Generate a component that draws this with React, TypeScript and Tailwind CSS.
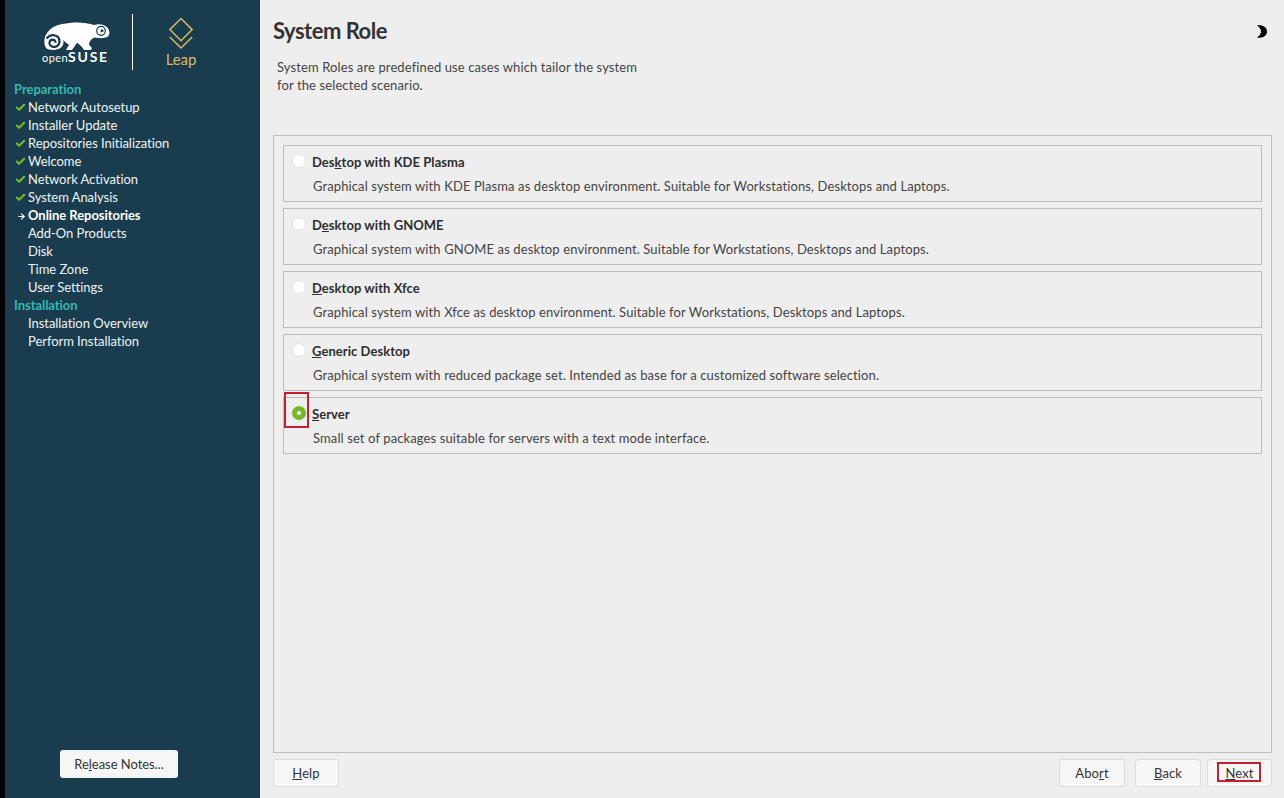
import { Check, ArrowRight } from 'lucide-react'
import type { ReactNode } from 'react'

const steps = [
  { label: 'Network Autosetup', state: 'done' },
  { label: 'Installer Update', state: 'done' },
  { label: 'Repositories Initialization', state: 'done' },
  { label: 'Welcome', state: 'done' },
  { label: 'Network Activation', state: 'done' },
  { label: 'System Analysis', state: 'done' },
  { label: 'Online Repositories', state: 'current' },
  { label: 'Add-On Products', state: 'todo' },
  { label: 'Disk', state: 'todo' },
  { label: 'Time Zone', state: 'todo' },
  { label: 'User Settings', state: 'todo' },
]

function Step({ label, state }: { label: string; state: string }) {
  return (
    <div className="flex h-[18px] items-center">
      <div className="flex w-[23px] shrink-0 items-center justify-end pr-[2px]">
        {state === 'done' && <Check size={11} strokeWidth={4.5} className="mb-[2px] text-[#73ba25]" />}
        {state === 'current' && <ArrowRight size={9} strokeWidth={3} className="text-white" />}
      </div>
      <span className={state === 'current' ? 'font-bold text-white' : 'text-[#eef2f3]'}>{label}</span>
    </div>
  )
}

function Logo() {
  return (
    <div className="flex h-[81px] items-start">
      <div className="relative mt-[14px] h-[56px] w-[128px] border-r border-white">
        <svg viewBox="0 5 70 27" preserveAspectRatio="none" className="absolute top-[8px] left-[37px] h-[28px] w-[70px]">
          <path
            d="M3 28 C0 18 8 9 20 7 C32 4.500 44 5 52 8 C56 6.500 62 7 65 10 C68 13 68 17 66 19 C62 21.500 56 20.500 52 20 C49 22 47 24 47 27 L50 30 L49 32 L42 32 C40 29 38 27 35 25 L30 32 L24 32 L27 27 C24 25 23 24 21 22 C23 27 19 32 11 32 C6 32 4 31 3 28 Z"
            fill="#fff"
          />
          <path
            d="M13.500 25 C13.500 21.500 8.500 21 7.500 24.500 C7 28 11 30 14.500 28.500 C18.500 26.500 18.500 20.500 14.500 18.500 C11 17 7 18 4.500 21"
            fill="none"
            stroke="#193d4f"
            strokeWidth="2.200"
          />
          <circle cx="59" cy="13.500" r="4.300" fill="none" stroke="#193d4f" strokeWidth="1.200" />
          <circle cx="60" cy="13.500" r="1.500" fill="#193d4f" />
        </svg>
        <div className="absolute top-[36px] left-[37px] flex h-[14px] items-center whitespace-nowrap text-white">
          <span className="text-[11px] leading-none font-normal tracking-[0.4px]">open</span>
          <span className="text-[14px] leading-none font-bold tracking-[1.8px]">SUSE</span>
        </div>
      </div>
      <div className="ml-[4px] flex w-[88px] flex-col items-center pt-[17px]">
        <svg viewBox="0 0 26 34" className="h-[33px] w-[26px]" fill="none" stroke="#dcb862" strokeWidth="1.500">
          <path d="M13 1.500 L24.500 13 L13 24.500 L1.500 13 Z" />
          <path d="M1.500 20.500 L13 32 L24.500 20.500" />
        </svg>
        <span className="mt-[-1px] text-[15px] leading-[20px] text-[#dcb862]">Leap</span>
      </div>
    </div>
  )
}

function Btn({ children, width, highlight }: { children: ReactNode; width: string; highlight?: boolean }) {
  return (
    <button className={`relative flex h-[28px] items-center justify-center rounded-[3px] border border-[#dcdcdc] bg-[#f6f6f6] pt-[1px] text-[#333] ${width}`}>
      {children}
      {highlight && <span className="absolute top-[2px] left-[9px] h-[20px] w-[44px] border-2 border-[#c5202f]" />}
    </button>
  )
}

function RoleCard({ title, desc, selected }: { title: ReactNode; desc: string; selected?: boolean }) {
  return (
    <div className="relative h-[57px] border border-[#bdbdbd] pl-[28px] pt-[7px]">
      <div
        className={`absolute top-[8px] left-[8px] flex h-[14px] w-[14px] items-center justify-center rounded-full ${
          selected ? 'bg-[#73ba25]' : 'border border-[#dfe2e8] bg-white'
        }`}
      >
        {selected && <span className="h-[4px] w-[4px] rounded-full bg-white" />}
      </div>
      {selected && <span className="absolute top-[-6px] left-[0px] h-[36px] w-[25px] border-2 border-[#c5202f]" />}
      <div className="h-[19px] leading-[19px] font-bold tracking-[0.05px] text-[#2e2e2e]">{title}</div>
      <div className="mt-[5px] pl-[1px] leading-[19px] text-[#444]">{desc}</div>
    </div>
  )
}

export default function App() {
  return (
    <div className="flex h-[798px] w-[1284px] overflow-hidden bg-black pl-[5px] font-['Lato',sans-serif] text-[13px] tracking-[0.11px]">
      <aside className="flex w-[255px] shrink-0 flex-col bg-[#193d4f] tracking-[-0.05px]">
        <Logo />
        <nav className="flex-1">
          <div className="flex h-[18px] items-center pl-[9px] font-bold text-[#35b9ab]">Preparation</div>
          {steps.map((s) => (
            <Step key={s.label} {...s} />
          ))}
          <div className="flex h-[18px] items-center pl-[9px] font-bold text-[#35b9ab]">Installation</div>
          <Step label="Installation Overview" state="todo" />
          <Step label="Perform Installation" state="todo" />
        </nav>
        <div className="pb-[20px] pl-[55px]">
          <button className="flex h-[28px] w-[118px] items-center justify-center rounded-[3px] bg-[#f6f6f6] pt-[1px] text-[#333]">
            <span>
              Re<u>l</u>ease Notes...
            </span>
          </button>
        </div>
      </aside>
      <main className="flex min-w-0 flex-1 flex-col bg-[#eeeeee] pr-[12px] pl-[13px]">
        <div className="flex h-[52px] items-center justify-between pt-[10px]">
          <h1 className="text-[22px] leading-none font-bold tracking-[-0.5px] text-[#333]">System Role</h1>
          <svg viewBox="0 0 11 13" className="mr-[5px] h-[13px] w-[11px]">
            <path d="M1 0.500 C7 -0.500 11 2.500 11 6.500 C11 10.500 7 13.500 1 12.500 C4 10.500 5 8.500 5 6.500 C5 4.500 4 2.500 1 0.500 Z" fill="#000" />
          </svg>
        </div>
        <p className="mt-[6px] h-[77px] pl-[4px] leading-[18px] text-[#444]">
          System Roles are predefined use cases which tailor the system
          <br />
          for the selected scenario.
        </p>
        <div className="flex h-[618px] flex-col gap-[6px] border border-[#bdbdbd] px-[9px] pt-[9px]">
          <RoleCard
            title={<>Des<u>k</u>top with KDE Plasma</>}
            desc="Graphical system with KDE Plasma as desktop environment. Suitable for Workstations, Desktops and Laptops."
          />
          <RoleCard
            title={<>D<u>e</u>sktop with GNOME</>}
            desc="Graphical system with GNOME as desktop environment. Suitable for Workstations, Desktops and Laptops."
          />
          <RoleCard
            title={<><u>D</u>esktop with Xfce</>}
            desc="Graphical system with Xfce as desktop environment. Suitable for Workstations, Desktops and Laptops."
          />
          <RoleCard
            title={<><u>G</u>eneric Desktop</>}
            desc="Graphical system with reduced package set. Intended as base for a customized software selection."
          />
          <RoleCard
            selected
            title={<><u>S</u>erver</>}
            desc="Small set of packages suitable for servers with a text mode interface."
          />
        </div>
        <div className="mt-[6px] flex items-center">
          <Btn width="w-[66px]"><span><u>H</u>elp</span></Btn>
          <div className="flex-1" />
          <Btn width="w-[66px]"><span>Abo<u>r</u>t</span></Btn>
          <div className="w-[10px]" />
          <Btn width="w-[66px]"><span><u>B</u>ack</span></Btn>
          <div className="w-[6px]" />
          <Btn width="w-[65px]" highlight><span><u>N</u>ext</span></Btn>
        </div>
      </main>
    </div>
  )
}
